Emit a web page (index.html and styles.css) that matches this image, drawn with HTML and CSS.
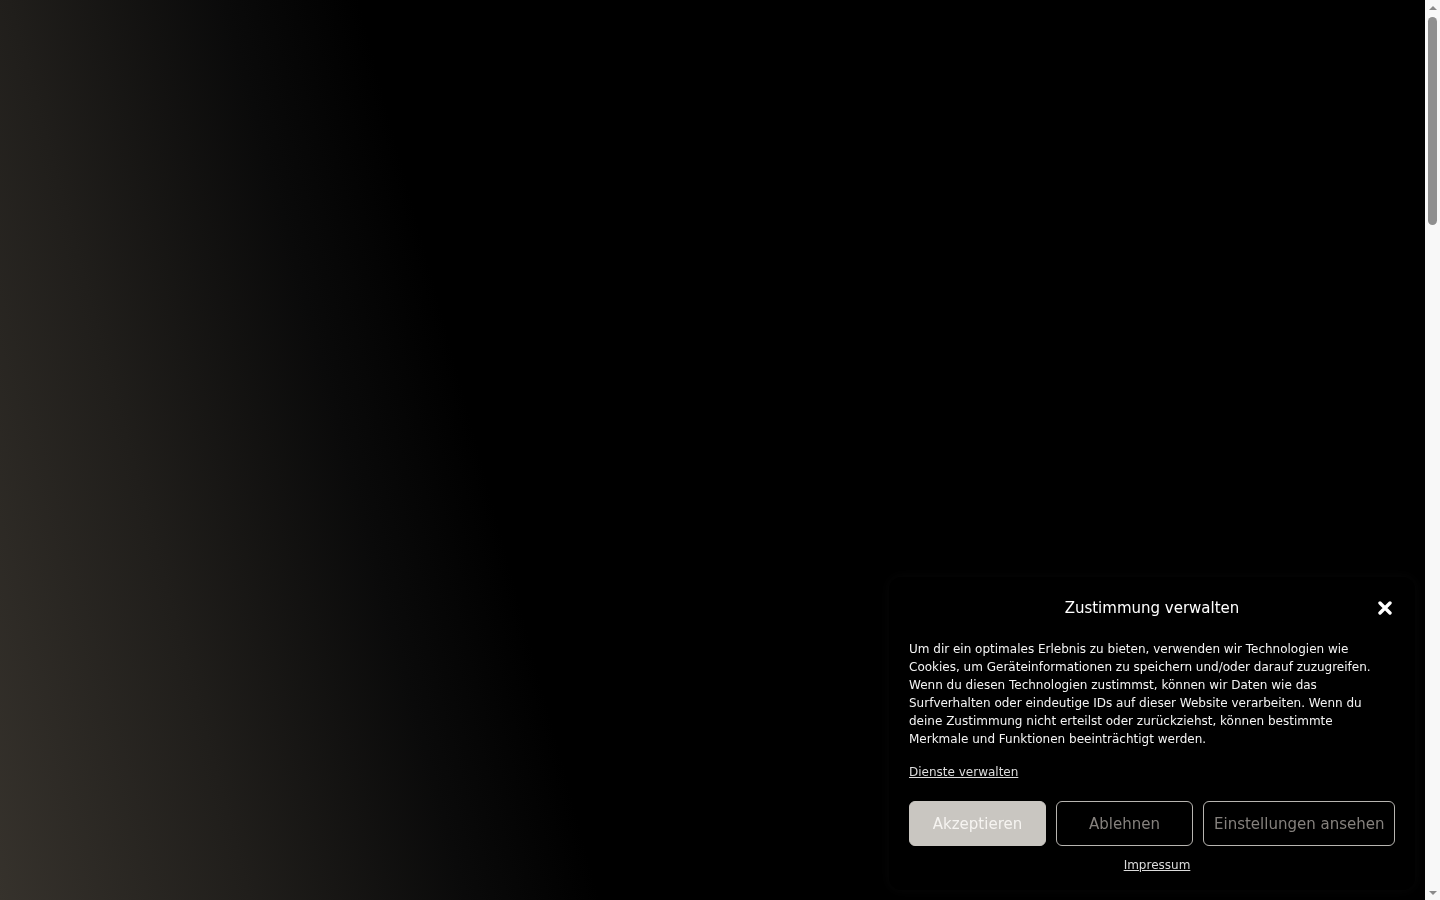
FILE: index.html
```html
<!DOCTYPE html>
<html lang="de">
<head>
<meta charset="utf-8">
<title>Zustimmung verwalten</title>
<link rel="stylesheet" href="styles.css">
</head>
<body>

<div class="page">
	<div class="hero"></div>
	<div class="rest"></div>
</div>

<!-- scrollbar of the captured window -->
<div class="scrollbar">
	<div class="sb-arrow sb-up"></div>
	<div class="sb-track"><div class="sb-thumb"></div></div>
	<div class="sb-arrow sb-down"></div>
</div>

<div class="cookie-banner">
	<div class="banner-header">
		<div class="banner-logo"></div>
		<div class="banner-title">Zustimmung verwalten</div>
		<div class="banner-close">
			<svg width="14" height="14" viewBox="0 0 14 14">
				<path d="M2 2 L12 12 M12 2 L2 12" stroke="#ffffff" stroke-width="3.4" stroke-linecap="round"/>
			</svg>
		</div>
	</div>

	<div class="banner-message">
		Um dir ein optimales Erlebnis zu bieten, verwenden wir Technologien wie Cookies, um Geräteinformationen zu speichern und/oder darauf zuzugreifen. Wenn du diesen Technologien zustimmst, können wir Daten wie das Surfverhalten oder eindeutige IDs auf dieser Website verarbeiten. Wenn du deine Zustimmung nicht erteilst oder zurückziehst, können bestimmte Merkmale und Funktionen beeinträchtigt werden.
	</div>

	<div class="banner-link"><a href="#">Dienste verwalten</a></div>

	<div class="banner-buttons">
		<button class="btn btn-accept">Akzeptieren</button>
		<button class="btn btn-deny">Ablehnen</button>
		<button class="btn btn-prefs">Einstellungen ansehen</button>
	</div>

	<div class="banner-docs"><a href="#">Impressum</a></div>
</div>

</body>
</html>
```

FILE: styles.css
```css
html, body
{
margin:0;
padding:0;
background-color:#000000;
font-family:"DejaVu Sans", sans-serif;
}

.page
{
margin-right:15px;
}

.hero
{
height:100vh;
background:linear-gradient(75deg, #36322c 0%, #201e1b 15%, #0a0a0a 28%, #000000 36%);
}

.rest
{
height:2866px;
background-color:#000000;
}

/* scrollbar */
.scrollbar
{
position:fixed;
top:0;
right:0;
width:15px;
height:100vh;
display:flex;
flex-direction:column;
background-color:#f8f8f8;
}

.sb-arrow
{
height:15px;
display:flex;
justify-content:center;
align-items:center;
}

.sb-up::before
{
content:"";
border-left:4px solid transparent;
border-right:4px solid transparent;
border-bottom:4px solid #8a8a8a;
}

.sb-down::before
{
content:"";
border-left:4px solid transparent;
border-right:4px solid transparent;
border-top:4px solid #8a8a8a;
}

.sb-track
{
flex:1;
padding:2px 3px;
}

.sb-thumb
{
height:208px;
background-color:#8f8f8f;
border-radius:5px;
}

.cookie-banner
{
position:fixed;
right:25px;
bottom:10px;
width:526px;
box-sizing:border-box;
padding:21px 20px 16px 20px;
background-color:#000000;
border-radius:12px;
box-shadow:0 0 12px rgba(255,255,255,0.03);
color:#f4f4f4;
}

.banner-header
{
display:grid;
grid-template-columns:40px 1fr 40px;
align-items:center;
height:20px;
}

.banner-title
{
text-align:center;
font-size:15px;
line-height:20px;
color:#ffffff;
}

.banner-close
{
display:flex;
justify-content:flex-end;
padding-right:3px;
}

.banner-close svg
{
display:block;
}

.banner-message
{
margin-top:22px;
font-size:12px;
line-height:18px;
}

.banner-link
{
margin-top:15px;
font-size:12px;
line-height:18px;
}

.banner-link a, .banner-docs a
{
color:#dddddd;
text-decoration:underline;
}

.banner-buttons
{
display:flex;
gap:10px;
margin-top:20px;
}

.btn
{
height:45px;
border-radius:6px;
font-family:"DejaVu Sans", sans-serif;
font-size:15px;
cursor:pointer;
padding:0 10px;
white-space:nowrap;
}

.btn-accept
{
flex:0 0 137px;
background-color:#c9c6c1;
border:1px solid #c9c6c1;
color:#f6f4f1;
}

.btn-deny
{
flex:0 0 137px;
background-color:#000000;
border:1px solid #b8b5b1;
color:#85817d;
}

.btn-prefs
{
flex:1;
background-color:#000000;
border:1px solid #b8b5b1;
color:#85817d;
}

.banner-docs
{
margin-top:10px;
text-align:center;
font-size:12px;
line-height:18px;
padding-left:10px;
}
```
